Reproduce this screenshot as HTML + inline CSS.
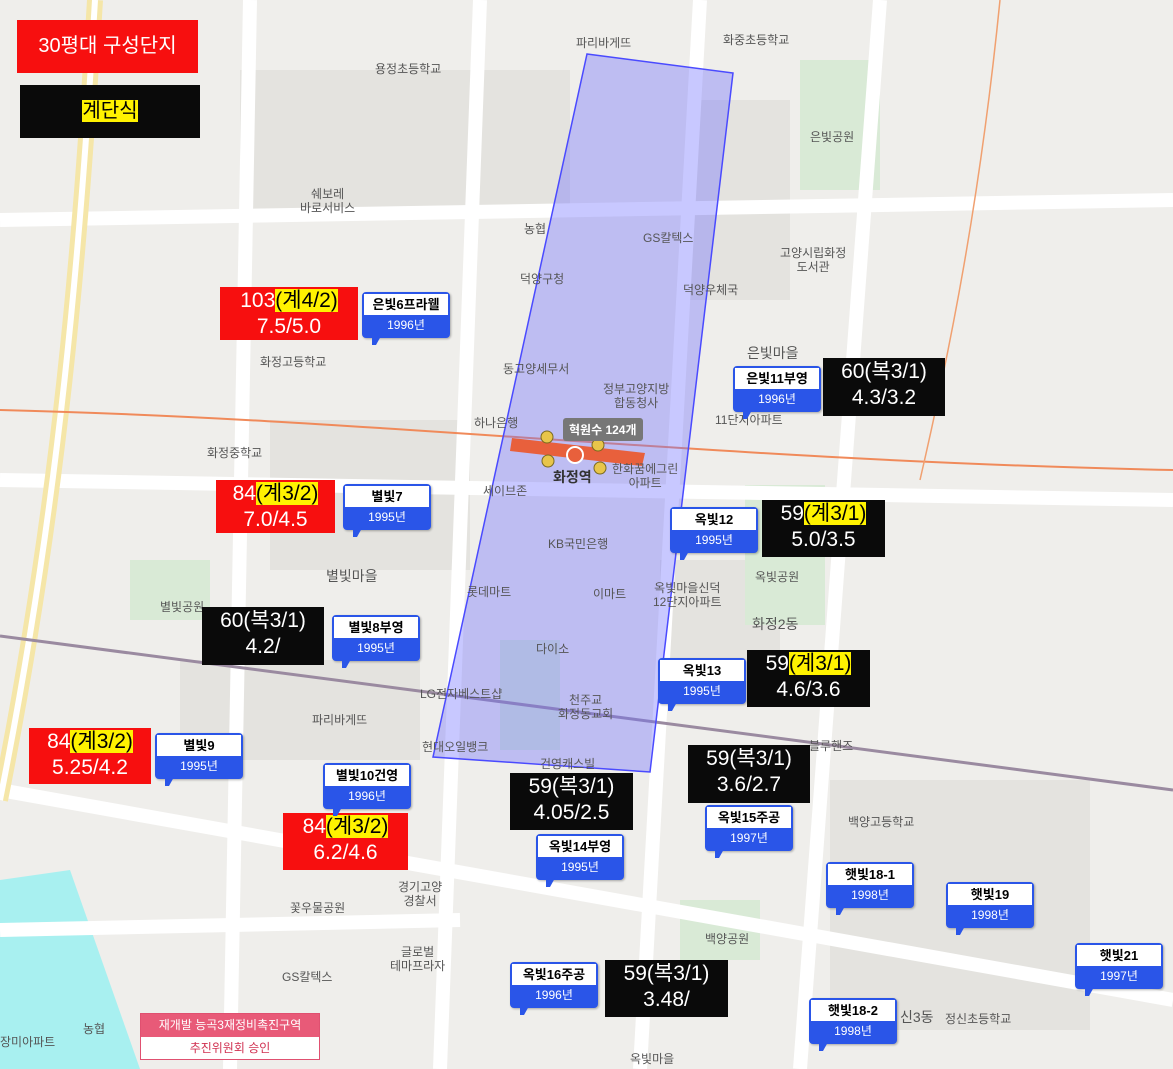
<!DOCTYPE html>
<html><head><meta charset="utf-8">
<style>
*{margin:0;padding:0;box-sizing:border-box}
body{width:1173px;height:1069px;overflow:hidden;position:relative;background:#efeeeb;font-family:"Liberation Sans","Noto Sans CJK KR",sans-serif}
.a{position:absolute}
.box{position:absolute;color:#fff;text-align:center;font-size:21px;line-height:26px;padding-top:1px}
.red{background:#f70f0f}
.blk{background:#0a0a0a}
.y{background:#fff200;color:#000}
.mk{position:absolute;border:2px solid #2a55e8;border-radius:4px;background:#2a55e8;width:88px;height:46px;box-shadow:1px 1px 2px rgba(0,0,0,.3)}
.mk .t{background:#fff;color:#000;font-size:13px;font-weight:bold;text-align:center;height:21px;line-height:21px}
.mk .b{color:#fff;font-size:12px;text-align:center;line-height:20px}
.mk:after{content:"";position:absolute;left:8px;bottom:-9px;border-left:4px solid #2a55e8;border-right:5px solid transparent;border-top:9px solid #2a55e8}
.lb{position:absolute;color:#555;font-size:12px;text-align:center;line-height:14px}
</style></head><body>
<svg class="a" style="left:0;top:0" width="1173" height="1069">
<!-- blocks -->
<g fill="#e4e3df">
<rect x="240" y="70" width="330" height="140"/><rect x="690" y="100" width="100" height="200"/>
<rect x="270" y="420" width="200" height="150"/><rect x="660" y="560" width="120" height="100"/>
<rect x="830" y="780" width="260" height="250"/><rect x="180" y="660" width="240" height="100"/>
</g>
<!-- parks -->
<g fill="#d9ead6">
<rect x="745" y="485" width="80" height="140"/><rect x="800" y="60" width="80" height="130"/>
<rect x="130" y="560" width="80" height="60"/><rect x="680" y="900" width="80" height="60"/>
<rect x="500" y="640" width="60" height="110"/>
</g>
<polygon points="0,880 70,870 140,1069 0,1069" fill="#a8f0f0"/>
<!-- roads -->
<g stroke="#fff" stroke-width="14" fill="none">
<path d="M880,0 L800,1069"/><path d="M0,220 L1173,200"/><path d="M480,0 L440,1069"/>
<path d="M0,790 L1173,1000"/><path d="M700,0 L640,1069"/><path d="M250,0 L230,1069"/>
<path d="M0,480 L1173,500"/><path d="M0,930 L460,920"/>
</g>
<path d="M95,0 C80,250 60,500 0,800" stroke="#f5e6a8" stroke-width="16" fill="none"/>
<path d="M95,0 C80,250 60,500 0,800" stroke="#fff" stroke-width="6" fill="none"/>
<path d="M0,410 C400,420 700,460 1173,470" stroke="#f08a5a" stroke-width="2" fill="none"/>
<path d="M0,636 L1173,790" stroke="#9a8aa0" stroke-width="3" fill="none"/>
<path d="M1000,0 C980,200 950,350 920,480" stroke="#f0a070" stroke-width="1.5" fill="none"/>
<!-- polygon -->
<polygon points="587,54 733,73 650,772 433,757" fill="rgba(110,110,255,0.38)" stroke="#4a4aff" stroke-width="1.5"/>
<polygon points="512,438 645,453 642,466 510,451" fill="#e8603c"/>
<circle cx="575" cy="455" r="8" fill="#e8603c" stroke="#fff" stroke-width="2"/>
<g fill="#e8c54a" stroke="#7a6a20"><circle cx="547" cy="437" r="6"/><circle cx="598" cy="445" r="6"/><circle cx="548" cy="461" r="6"/><circle cx="600" cy="468" r="6"/></g>
</svg>
<div class="a" style="left:563;top:418px;left:563px;background:#777;color:#fff;font-size:12px;font-weight:bold;padding:3px 6px;border-radius:3px">혁원수 124개</div>
<div class="lb" style="left:553px;top:470px;font-size:14px;font-weight:bold;color:#333">화정역</div>

<!-- map labels -->
<div class="lb" style="left:576px;top:36px">파리바게뜨</div>
<div class="lb" style="left:723px;top:33px">화중초등학교</div>
<div class="lb" style="left:375px;top:62px">용정초등학교</div>
<div class="lb" style="left:810px;top:130px">은빛공원</div>
<div class="lb" style="left:300px;top:187px">쉐보레<br>바로서비스</div>
<div class="lb" style="left:524px;top:222px">농협</div>
<div class="lb" style="left:643px;top:231px">GS칼텍스</div>
<div class="lb" style="left:780px;top:246px">고양시립화정<br>도서관</div>
<div class="lb" style="left:520px;top:272px">덕양구청</div>
<div class="lb" style="left:683px;top:283px">덕양우체국</div>
<div class="lb" style="left:747px;top:346px;font-size:14px">은빛마을</div>
<div class="lb" style="left:260px;top:355px">화정고등학교</div>
<div class="lb" style="left:503px;top:362px">동고양세무서</div>
<div class="lb" style="left:603px;top:382px">정부고양지방<br>합동청사</div>
<div class="lb" style="left:715px;top:413px">11단지아파트</div>
<div class="lb" style="left:474px;top:416px">하나은행</div>
<div class="lb" style="left:207px;top:446px">화정중학교</div>
<div class="lb" style="left:612px;top:462px">한화꿈에그린<br>아파트</div>
<div class="lb" style="left:483px;top:484px">세이브존</div>
<div class="lb" style="left:548px;top:537px">KB국민은행</div>
<div class="lb" style="left:326px;top:569px;font-size:14px">별빛마을</div>
<div class="lb" style="left:755px;top:570px">옥빛공원</div>
<div class="lb" style="left:653px;top:581px">옥빛마을신덕<br>12단지아파트</div>
<div class="lb" style="left:467px;top:585px">롯데마트</div>
<div class="lb" style="left:593px;top:587px">이마트</div>
<div class="lb" style="left:160px;top:600px">별빛공원</div>
<div class="lb" style="left:752px;top:617px;font-size:14px">화정2동</div>
<div class="lb" style="left:536px;top:642px">다이소</div>
<div class="lb" style="left:420px;top:687px">LG전자베스트샵</div>
<div class="lb" style="left:558px;top:693px">천주교<br>화정동교회</div>
<div class="lb" style="left:312px;top:713px">파리바게뜨</div>
<div class="lb" style="left:809px;top:739px">블루핸즈</div>
<div class="lb" style="left:422px;top:740px">현대오일뱅크</div>
<div class="lb" style="left:540px;top:757px">건영캐스빌</div>
<div class="lb" style="left:848px;top:815px">백양고등학교</div>
<div class="lb" style="left:398px;top:880px">경기고양<br>경찰서</div>
<div class="lb" style="left:290px;top:901px">꽃우물공원</div>
<div class="lb" style="left:705px;top:932px">백양공원</div>
<div class="lb" style="left:390px;top:945px">글로벌<br>테마프라자</div>
<div class="lb" style="left:282px;top:970px">GS칼텍스</div>
<div class="lb" style="left:83px;top:1022px">농협</div>
<div class="lb" style="left:0px;top:1035px">장미아파트</div>
<div class="lb" style="left:900px;top:1010px;font-size:14px">신3동</div>
<div class="lb" style="left:945px;top:1012px">정신초등학교</div>
<div class="lb" style="left:630px;top:1052px">옥빛마을</div>

<!-- legend -->
<div class="box red" style="left:17px;top:20px;width:181px;height:53px;line-height:50px;font-size:20px">30평대 구성단지</div>
<div class="box blk" style="left:20px;top:85px;width:180px;height:53px;line-height:50px;font-size:20px"><span class="y">계단식</span></div>

<!-- info boxes -->
<div class="box red" style="left:220px;top:287px;width:138px;height:53px">103<span class="y">(계4/2)</span><br>7.5/5.0</div>
<div class="box blk" style="left:823px;top:358px;width:122px;height:58px">60(복3/1)<br>4.3/3.2</div>
<div class="box red" style="left:216px;top:480px;width:119px;height:53px">84<span class="y">(계3/2)</span><br>7.0/4.5</div>
<div class="box blk" style="left:762px;top:500px;width:123px;height:57px">59<span class="y">(계3/1)</span><br>5.0/3.5</div>
<div class="box blk" style="left:202px;top:607px;width:122px;height:58px">60(복3/1)<br>4.2/</div>
<div class="box blk" style="left:747px;top:650px;width:123px;height:57px">59<span class="y">(계3/1)</span><br>4.6/3.6</div>
<div class="box red" style="left:29px;top:728px;width:122px;height:56px">84<span class="y">(계3/2)</span><br>5.25/4.2</div>
<div class="box blk" style="left:688px;top:745px;width:122px;height:58px">59(복3/1)<br>3.6/2.7</div>
<div class="box blk" style="left:510px;top:773px;width:123px;height:57px">59(복3/1)<br>4.05/2.5</div>
<div class="box red" style="left:283px;top:813px;width:125px;height:57px">84<span class="y">(계3/2)</span><br>6.2/4.6</div>
<div class="box blk" style="left:605px;top:960px;width:123px;height:57px">59(복3/1)<br>3.48/</div>

<!-- markers -->
<div class="mk" style="left:362px;top:292px"><div class="t">은빛6프라웰</div><div class="b">1996년</div></div>
<div class="mk" style="left:733px;top:366px"><div class="t">은빛11부영</div><div class="b">1996년</div></div>
<div class="mk" style="left:343px;top:484px"><div class="t">별빛7</div><div class="b">1995년</div></div>
<div class="mk" style="left:670px;top:507px"><div class="t">옥빛12</div><div class="b">1995년</div></div>
<div class="mk" style="left:332px;top:615px"><div class="t">별빛8부영</div><div class="b">1995년</div></div>
<div class="mk" style="left:658px;top:658px"><div class="t">옥빛13</div><div class="b">1995년</div></div>
<div class="mk" style="left:155px;top:733px"><div class="t">별빛9</div><div class="b">1995년</div></div>
<div class="mk" style="left:323px;top:763px"><div class="t">별빛10건영</div><div class="b">1996년</div></div>
<div class="mk" style="left:705px;top:805px"><div class="t">옥빛15주공</div><div class="b">1997년</div></div>
<div class="mk" style="left:536px;top:834px"><div class="t">옥빛14부영</div><div class="b">1995년</div></div>
<div class="mk" style="left:826px;top:862px"><div class="t">햇빛18-1</div><div class="b">1998년</div></div>
<div class="mk" style="left:946px;top:882px"><div class="t">햇빛19</div><div class="b">1998년</div></div>
<div class="mk" style="left:1075px;top:943px"><div class="t">햇빛21</div><div class="b">1997년</div></div>
<div class="mk" style="left:510px;top:962px"><div class="t">옥빛16주공</div><div class="b">1996년</div></div>
<div class="mk" style="left:809px;top:998px"><div class="t">햇빛18-2</div><div class="b">1998년</div></div>

<div class="a" style="left:140px;top:1013px;width:180px;height:47px;border:1px solid #e05070;background:#fff;font-size:12px;text-align:center">
<div style="background:#e85a78;color:#fff;height:23px;line-height:23px">재개발 능곡3재정비촉진구역</div>
<div style="color:#d03050;line-height:22px">추진위원회 승인</div></div>
</body></html>
